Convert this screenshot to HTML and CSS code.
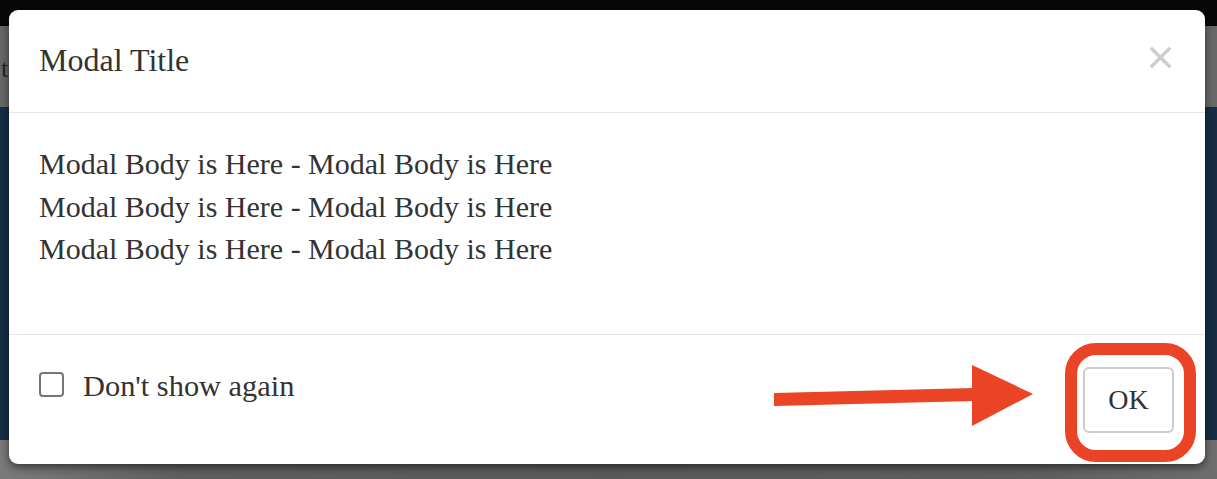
FILE: index.html
```html
<!DOCTYPE html>
<html lang="en">
<head>
<meta charset="utf-8">
<title>Modal</title>
<link rel="stylesheet" href="styles.css">
</head>
<body>
<div class="page">
  <div class="band-top"></div>
  <div class="band-nav"><span class="nav-text">t</span></div>
  <div class="band-main"></div>
  <div class="band-bottom"></div>
</div>

<div class="modal">
  <div class="modal-header">
    <h1 class="modal-title">Modal Title</h1>
    <svg class="close" width="21" height="21" viewBox="0 0 21 21" aria-label="Close">
      <path d="M2 2 L19 19 M19 2 L2 19" stroke="#cdcdcd" stroke-width="3.4" stroke-linecap="square"/>
    </svg>
  </div>
  <div class="modal-body">
    <p>Modal Body is Here - Modal Body is Here</p>
    <p>Modal Body is Here - Modal Body is Here</p>
    <p>Modal Body is Here - Modal Body is Here</p>
  </div>
  <div class="modal-footer">
    <label class="check">
      <span class="check-box"></span>
      <span class="check-label">Don't show again</span>
    </label>
    <button class="btn-ok">OK</button>
  </div>
</div>

<svg class="annotation" width="1217" height="479" viewBox="0 0 1217 479">
  <polygon points="774,393 974,388 974,401 774,406" fill="#ea4325"/>
  <polygon points="972,365 1033,394 972,426" fill="#ea4325"/>
  <rect x="1071" y="349" width="119" height="107" rx="25" ry="25" fill="none" stroke="#ea4325" stroke-width="12"/>
</svg>
</body>
</html>
```

FILE: styles.css
```css
html, body {
  margin: 0;
  padding: 0;
}

body {
  width: 1217px;
  height: 479px;
  overflow: hidden;
  position: relative;
  font-family: "Liberation Serif", "Times New Roman", serif;
  color: #333;
}

.page {
  display: flex;
  flex-direction: column;
  height: 479px;
}

.band-top {
  height: 26px;
  background: #080808;
}

.band-nav {
  height: 81px;
  background: #686868;
  display: flex;
  align-items: center;
  overflow: hidden;
}

.nav-text {
  font-size: 26px;
  color: #262626;
  margin-left: 1px;
  margin-top: 4px;
}

.band-main {
  flex: 1;
  background: #172d45;
}

.band-bottom {
  height: 39px;
  background: linear-gradient(to right, #7a7a7a 0%, #5e5e5e 15%, #5a5a5a 50%, #5e5e5e 85%, #6e6e6e 100%);
}

.modal {
  position: absolute;
  left: 9px;
  top: 10px;
  width: 1196px;
  height: 454px;
  background: #fff;
  border-radius: 9px;
  box-shadow: 0 3px 8px rgba(0, 0, 0, 0.55);
  display: flex;
  flex-direction: column;
}

.modal-header {
  height: 103px;
  box-sizing: border-box;
  border-bottom: 1px solid #e5e5e5;
  padding: 0 34px 0 30px;
  display: flex;
  align-items: center;
  justify-content: space-between;
}

.modal-title {
  margin: 0;
  font-size: 32px;
  font-weight: normal;
  line-height: 1.1;
  color: #333;
  margin-top: -1px;
}

.close {
  display: block;
  margin-top: -8px;
}

.modal-body {
  padding: 30px 30px 0;
  height: 191px;
}

.modal-body p {
  margin: 0;
  font-size: 30px;
  line-height: 42.5px;
}

.modal-footer {
  flex: 1;
  border-top: 1px solid #e5e5e5;
  padding: 0 31px 0 30px;
  display: flex;
  align-items: center;
  justify-content: space-between;
}

.check {
  display: flex;
  align-items: center;
  gap: 19px;
  margin-bottom: 30px;
}

.check-box {
  width: 21px;
  height: 21px;
  border: 2px solid #767676;
  border-radius: 4px;
  background: #fff;
}

.check-label {
  font-size: 30.4px;
  line-height: 34px;
  margin-top: 2px;
}

.btn-ok {
  width: 91px;
  height: 66px;
  box-sizing: border-box;
  background: #fff;
  border: 2px solid #cccccc;
  border-radius: 6px;
  font-family: "Liberation Serif", "Times New Roman", serif;
  font-size: 28px;
  color: #333;
  padding: 0;
  margin-top: 1px;
}

.annotation {
  position: absolute;
  left: 0;
  top: 0;
}
```
